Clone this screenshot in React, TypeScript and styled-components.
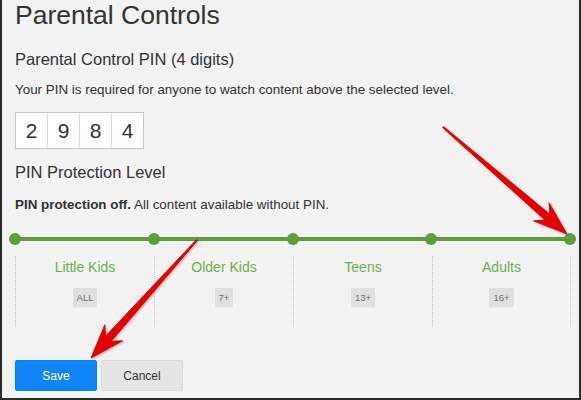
import React from 'react'
import styled, { createGlobalStyle } from 'styled-components'

const LEVELS = [
  { name: 'Little Kids', badge: 'ALL' },
  { name: 'Older Kids', badge: '7+' },
  { name: 'Teens', badge: '13+' },
  { name: 'Adults', badge: '16+' },
]

const PIN = ['2', '9', '8', '4']

// arrows drawn from tail to tip, shaft tapering into a swept head
const ARROWS = [
  { x1: 443, y1: 127, x2: 567, y2: 234 },
  { x1: 197, y1: 240, x2: 91, y2: 358 },
]

const Arrow = ({ x1, y1, x2, y2 }: { x1: number; y1: number; x2: number; y2: number }) => {
  const dx = x2 - x1
  const dy = y2 - y1
  const len = Math.sqrt(dx * dx + dy * dy)
  const angle = (Math.atan2(dy, dx) * 180) / Math.PI
  const pts = [
    [0, -0.7],
    [len - 26, -3.8],
    [len - 34, -12],
    [len, 0],
    [len - 34, 12],
    [len - 26, 3.8],
    [0, 0.7],
  ]
    .map((p) => p.join(','))
    .join(' ')
  return (
    <g transform={`translate(${x1} ${y1}) rotate(${angle})`}>
      <polygon points={pts} fill="#e80000" stroke="#c00000" strokeWidth="0.7" strokeLinejoin="round" />
    </g>
  )
}

const App = () => {
  return (
    <>
      <GlobalStyle />
      <Frame>
        <Title>Parental Controls</Title>
        <SubHeading>Parental Control PIN (4 digits)</SubHeading>
        <Body>Your PIN is required for anyone to watch content above the selected level.</Body>
        <PinRow>
          {PIN.map((d, i) => (
            <PinBox key={i}>{d}</PinBox>
          ))}
        </PinRow>
        <SubHeading $top={13}>PIN Protection Level</SubHeading>
        <Body $top={15}>
          <strong>PIN protection off.</strong> All content available without PIN.
        </Body>
        <Track>
          {LEVELS.map((l) => (
            <Dot key={l.name} />
          ))}
          <Dot />
        </Track>
        <Levels>
          {LEVELS.map((l) => (
            <Level key={l.name}>
              <LevelName>{l.name}</LevelName>
              <Badge>{l.badge}</Badge>
            </Level>
          ))}
        </Levels>
        <Actions>
          <Button $primary>Save</Button>
          <Button>Cancel</Button>
        </Actions>
        <Overlay width="581" height="400" viewBox="0 0 581 400">
          {ARROWS.map((a, i) => (
            <Arrow key={i} {...a} />
          ))}
        </Overlay>
      </Frame>
    </>
  )
}

export default App

const GlobalStyle = createGlobalStyle`
  html, body {
    margin: 0;
    padding: 0;
    background: #f2f2f2;
  }
  body {
    font-family: "Liberation Sans", Arial, sans-serif;
    color: #333;
  }
`

const Frame = styled.div`
  position: relative;
  box-sizing: border-box;
  width: 581px;
  height: 400px;
  overflow: hidden;
  background: #f2f2f2;
  border-left: 2px solid #2b2b2b;
  border-right: 2px solid #2b2b2b;
  border-bottom: 2px solid #2b2b2b;
  padding: 0 8px 0 13px;
`

const Title = styled.h1`
  margin: 0;
  font-size: 26.5px;
  line-height: 30px;
  font-weight: normal;
  color: #333;
`

const SubHeading = styled.h2<{ $top?: number }>`
  margin: ${(p) => p.$top ?? 19}px 0 0;
  font-size: 16.5px;
  line-height: 20px;
  font-weight: normal;
  color: #333;
`

const Body = styled.p<{ $top?: number }>`
  margin: ${(p) => p.$top ?? 13}px 0 0;
  font-size: 13.4px;
  line-height: 16px;
  color: #333;

  strong {
    font-weight: bold;
  }
`

const PinRow = styled.div`
  display: flex;
  margin-top: 14px;
  width: max-content;
  border: 1px solid #c8c8c8;
  background: #fff;
`

const PinBox = styled.div`
  width: 31px;
  height: 35px;
  display: flex;
  align-items: center;
  justify-content: center;
  font-size: 21px;
  color: #333;

  & + & {
    border-left: 1px solid #dcdcdc;
  }
`

const Track = styled.div`
  position: relative;
  display: flex;
  justify-content: space-between;
  width: 567px;
  margin: 20px 0 0 -6px;

  &::before {
    content: '';
    position: absolute;
    left: 6px;
    right: 6px;
    top: 4px;
    height: 4px;
    background: #5c9e3c;
  }
`

const Dot = styled.span`
  position: relative;
  width: 12px;
  height: 12px;
  border-radius: 50%;
  background: #5c9e3c;
`

const Levels = styled.div`
  display: grid;
  grid-template-columns: repeat(4, 1fr);
  width: 556px;
  margin-top: 11px;
`

const Level = styled.div`
  display: flex;
  flex-direction: column;
  align-items: center;
  height: 71px;
  padding-top: 3px;
  box-sizing: border-box;
  border-left: 1px dotted #c4c4c4;

  &:last-child {
    border-right: 1px dotted #c4c4c4;
  }
`

const LevelName = styled.div`
  font-size: 14px;
  line-height: 17px;
  color: #6cb04a;
`

const Badge = styled.span`
  margin-top: 12px;
  padding: 0 4px;
  height: 19px;
  line-height: 19px;
  font-size: 9.5px;
  color: #6f6f6f;
  background: #e0e0e0;
`

const Actions = styled.div`
  display: flex;
  gap: 4px;
  margin-top: 33px;
`

const Button = styled.button<{ $primary?: boolean }>`
  width: 82px;
  height: 31px;
  border-radius: 2px;
  font-family: "Liberation Sans", Arial, sans-serif;
  font-size: 12px;
  cursor: pointer;
  border: 1px solid ${(p) => (p.$primary ? '#0b7fef' : '#dadada')};
  background: ${(p) => (p.$primary ? '#0f86f7' : '#e5e5e5')};
  color: ${(p) => (p.$primary ? '#fff' : '#333')};
`

const Overlay = styled.svg`
  position: absolute;
  left: -2px;
  top: 0;
  pointer-events: none;
  filter: drop-shadow(1px 1px 1px rgba(90, 0, 0, 0.35));
`
